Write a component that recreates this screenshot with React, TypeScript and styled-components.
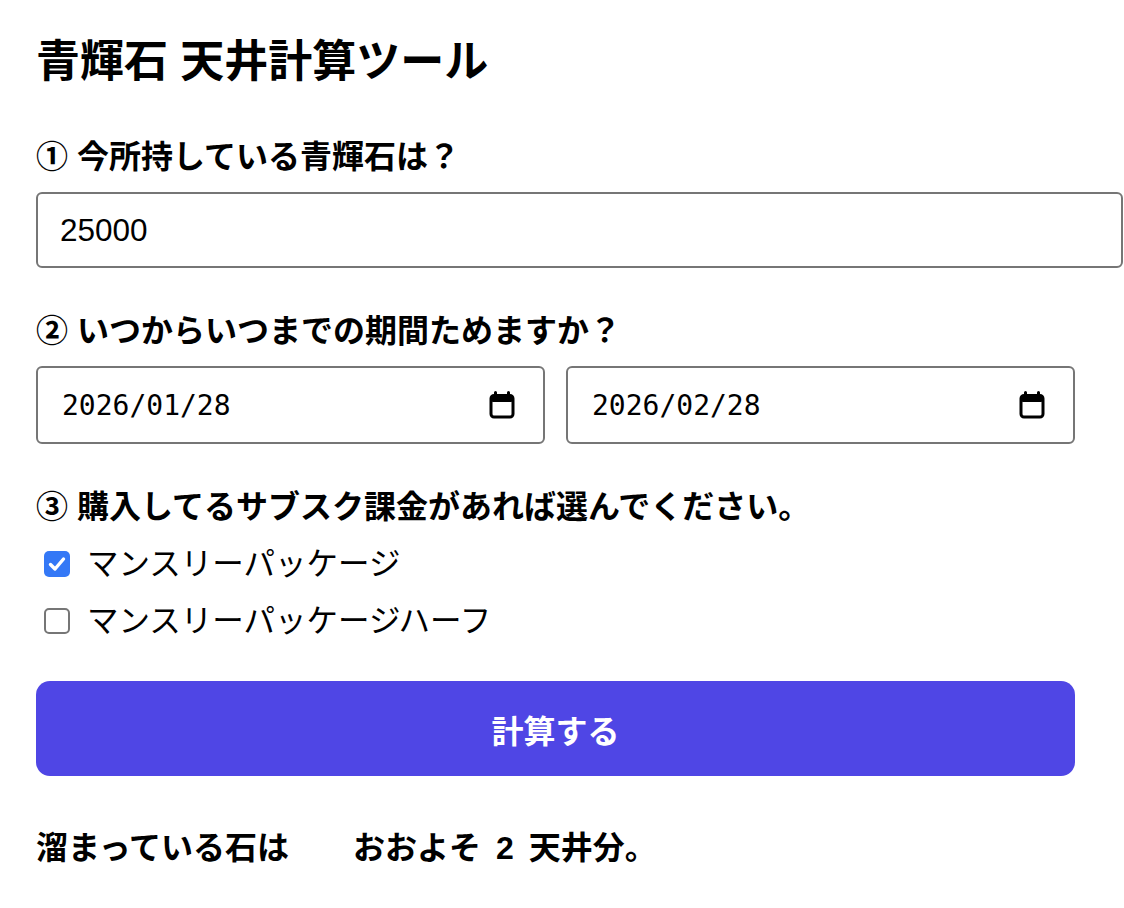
import { useState } from "react";
import styled, { createGlobalStyle } from "styled-components";

const GlobalStyle = createGlobalStyle`
  body {
    margin: 0;
    background: #fff;
    color: #000;
    font-family: "Liberation Sans", "Noto Sans CJK JP", sans-serif;
  }
`;

const plans = [
  { id: "monthly", label: "マンスリーパッケージ" },
  { id: "half", label: "マンスリーパッケージハーフ" },
];

function CalendarIcon() {
  return (
    <svg width="26" height="28" viewBox="0 0 26 28" aria-hidden>
      <path d="M6.5 1.5v5M19.5 1.5v5" stroke="#000" strokeWidth="3" strokeLinecap="round" />
      <rect x="2" y="4.5" width="22" height="21.5" rx="3" fill="none" stroke="#000" strokeWidth="3" />
      <rect x="2" y="4.5" width="22" height="6.5" rx="2" fill="#000" />
    </svg>
  );
}

export default function App() {
  const [stones, setStones] = useState("25000");
  const [from, setFrom] = useState("2026/01/28");
  const [to, setTo] = useState("2026/02/28");
  const [checked, setChecked] = useState<Record<string, boolean>>({ monthly: true, half: false });

  return (
    <>
      <GlobalStyle />
      <Page>
        <Title>青輝石 天井計算ツール</Title>
        <Form>
          <Field>
            <Label>① 今所持している青輝石は？</Label>
            <NumberInput value={stones} onChange={(e) => setStones(e.target.value)} />
          </Field>

          <Field>
            <Label>② いつからいつまでの期間ためますか？</Label>
            <DateRow>
              <DateBox>
                <DateText value={from} onChange={(e) => setFrom(e.target.value)} />
                <CalendarIcon />
              </DateBox>
              <DateBox>
                <DateText value={to} onChange={(e) => setTo(e.target.value)} />
                <CalendarIcon />
              </DateBox>
            </DateRow>
          </Field>

          <Field>
            <Label>③ 購入してるサブスク課金があれば選んでください。</Label>
            <CheckList>
              {plans.map((p) => (
                <CheckRow
                  key={p.id}
                  onClick={() => setChecked((c) => ({ ...c, [p.id]: !c[p.id] }))}
                >
                  <Box $checked={checked[p.id]}>
                    {checked[p.id] && (
                      <svg width="26" height="26" viewBox="0 0 26 26" aria-hidden>
                        <path
                          d="M6.5 13.5l4.5 4.5 8.5-10"
                          fill="none"
                          stroke="#fff"
                          strokeWidth="3.4"
                          strokeLinecap="round"
                          strokeLinejoin="round"
                        />
                      </svg>
                    )}
                  </Box>
                  <CheckText>{p.label}</CheckText>
                </CheckRow>
              ))}
            </CheckList>
          </Field>
        </Form>

        <SubmitButton type="button">計算する</SubmitButton>

        <Result>
          溜まっている石は　　おおよそ <Num>2</Num> 天井分。
        </Result>
      </Page>
    </>
  );
}

const Page = styled.div`
  width: 1039px;
  padding: 35px 0 40px 36px;
`;

const Title = styled.h1`
  margin: 0 0 47px;
  font-size: 44px;
  line-height: 53px;
  font-weight: 700;
`;

const Form = styled.div`
  display: flex;
  flex-direction: column;
  gap: 41px;
`;

const Field = styled.div`
  display: flex;
  flex-direction: column;
  gap: 13px;
`;

const Label = styled.div`
  font-size: 32px;
  line-height: 44px;
  font-weight: 700;
`;

const NumberInput = styled.input`
  box-sizing: content-box;
  width: 100%;
  height: 72px;
  padding: 0 22px;
  border: 2px solid #767676;
  border-radius: 6px;
  font-family: "Liberation Sans", sans-serif;
  font-size: 31.5px;
  color: #000;
  outline: none;
`;

const DateRow = styled.div`
  display: grid;
  grid-template-columns: 1fr 1fr;
  gap: 21px;
`;

const DateBox = styled.label`
  display: flex;
  align-items: center;
  height: 78px;
  box-sizing: border-box;
  padding: 0 28px 0 24px;
  border: 2px solid #767676;
  border-radius: 6px;
`;

const DateText = styled.input`
  flex: 1;
  min-width: 0;
  border: 0;
  padding: 0;
  outline: none;
  font-family: "DejaVu Sans Mono", monospace;
  font-size: 28px;
  color: #000;
  background: transparent;
`;

const CheckList = styled.div`
  display: flex;
  flex-direction: column;
  gap: 13px;
`;

const CheckRow = styled.div`
  display: flex;
  align-items: center;
  gap: 17px;
  height: 44px;
  padding-left: 8px;
  cursor: pointer;
`;

const Box = styled.span<{ $checked: boolean }>`
  display: flex;
  width: 26px;
  height: 26px;
  box-sizing: border-box;
  border-radius: 5px;
  background: ${({ $checked }) => ($checked ? "#3478f6" : "#fff")};
  border: ${({ $checked }) => ($checked ? "0" : "2px solid #767676")};
`;

const CheckText = styled.span`
  font-size: 31.5px;
  line-height: 44px;
`;

const SubmitButton = styled.button`
  display: block;
  width: 100%;
  height: 95px;
  margin-top: 38px;
  border: 0;
  border-radius: 14px;
  background: #4f46e5;
  color: #fff;
  font-family: "Liberation Sans", "Noto Sans CJK JP", sans-serif;
  font-size: 32px;
  font-weight: 700;
  cursor: pointer;
`;

const Result = styled.p`
  margin: 50px 0 0;
  font-size: 32px;
  line-height: 44px;
  font-weight: 700;
`;

const Num = styled.span`
  margin: 0 6px;
`;
